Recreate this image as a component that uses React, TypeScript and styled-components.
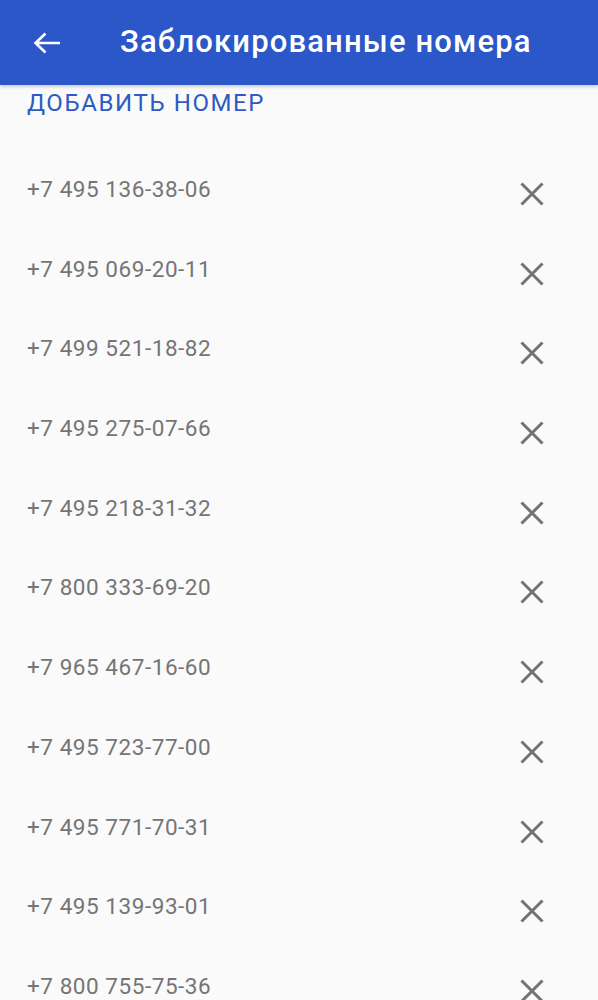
import React from "react";
import styled, { createGlobalStyle } from "styled-components";

const Global = createGlobalStyle`
  html, body { margin: 0; padding: 0; background: #fafafa; overflow: hidden; }
  body { font-family: Roboto, "Noto Sans", sans-serif; }
`;

const Page = styled.div`
  width: 598px;
  height: 1000px;
  background: #fafafa;
  overflow: hidden;
  display: flex;
  flex-direction: column;
`;

const AppBar = styled.header`
  flex: none;
  height: 85px;
  background: #2b57c8;
  display: flex;
  align-items: center;
  box-shadow: 0 2px 3px rgba(0, 0, 0, 0.18);
  position: relative;
  z-index: 1;
`;

const BackButton = styled.button`
  width: 94px;
  height: 85px;
  border: 0;
  background: transparent;
  display: flex;
  align-items: center;
  justify-content: flex-start;
  padding: 0 0 0 33px;
  box-sizing: border-box;
`;

const Title = styled.h1`
  margin: 0 0 2px 26px;
  font-size: 31px;
  font-weight: 500;
  color: #fff;
  letter-spacing: 1.15px;
`;

const Content = styled.main`
  flex: 1;
  overflow: hidden;
`;

const AddButton = styled.button`
  display: block;
  margin: 0;
  padding: 4px 27px 0;
  border: 0;
  background: transparent;
  font-family: Roboto, sans-serif;
  font-size: 24px;
  letter-spacing: 1.6px;
  color: #2d5ac4;
  text-transform: uppercase;
  line-height: 28px;
`;

const List = styled.ul`
  list-style: none;
  margin: 0;
  padding: 58px 0 0;
`;

const Row = styled.li`
  height: 79.7px;
  display: flex;
  align-items: flex-start;
  justify-content: space-between;
  padding: 0 54px 0 27px;
`;

const Phone = styled.span`
  font-size: 22.5px;
  letter-spacing: 0.55px;
  line-height: 28px;
  color: #757575;
`;

const RemoveButton = styled.button`
  border: 0;
  background: transparent;
  padding: 0;
  margin-top: 7px;
  width: 24px;
  height: 24px;
  display: flex;
`;

const phones = [
  "+7 495 136-38-06",
  "+7 495 069-20-11",
  "+7 499 521-18-82",
  "+7 495 275-07-66",
  "+7 495 218-31-32",
  "+7 800 333-69-20",
  "+7 965 467-16-60",
  "+7 495 723-77-00",
  "+7 495 771-70-31",
  "+7 495 139-93-01",
  "+7 800 755-75-36",
];

const CloseIcon = () => (
  <svg width="24" height="24" viewBox="0 0 24 24">
    <path d="M1.5 1.5 L22.5 22.5 M22.5 1.5 L1.5 22.5" stroke="#737373" strokeWidth="3" fill="none" />
  </svg>
);

const BackIcon = () => (
  <svg width="28" height="22" viewBox="0 0 28 22">
    <path d="M27 11H3 M12.5 1.5 L2.5 11 L12.5 20.5" stroke="#fff" strokeWidth="2.6" fill="none" />
  </svg>
);

export default function App() {
  return (
    <Page>
      <Global />
      <AppBar>
        <BackButton aria-label="Назад">
          <BackIcon />
        </BackButton>
        <Title>Заблокированные номера</Title>
      </AppBar>
      <Content>
        <AddButton>Добавить номер</AddButton>
        <List>
          {phones.map((p) => (
            <Row key={p}>
              <Phone>{p}</Phone>
              <RemoveButton aria-label="Удалить">
                <CloseIcon />
              </RemoveButton>
            </Row>
          ))}
        </List>
      </Content>
    </Page>
  );
}
